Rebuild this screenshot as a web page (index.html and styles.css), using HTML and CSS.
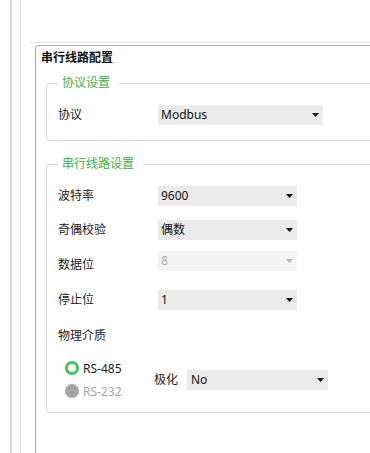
FILE: index.html
```html
<!DOCTYPE html>
<html lang="zh-CN">
<head>
    <meta charset="UTF-8">
    <meta name="viewport" content="width=device-width, initial-scale=1.0">
    <title>串行线路配置</title>
    <link rel="stylesheet" href="styles.css">
</head>
<body>
<div class="shell">
    <div class="pane">
        <div class="toolbarRule"></div>

        <section class="config">
            <div class="configTitle">串行线路配置</div>

            <fieldset class="group groupProtocol">
                <legend>协议设置</legend>
                <div class="row">
                    <span class="rowLabel">协议</span>
                    <div class="combo comboWide">
                        <span>Modbus</span>
                        <svg class="arrow" width="7" height="4" viewBox="0 0 7 4"><path d="M0 0H7L3.5 4Z"/></svg>
                    </div>
                </div>
            </fieldset>

            <fieldset class="group groupSerial">
                <legend>串行线路设置</legend>
                <div class="row">
                    <span class="rowLabel">波特率</span>
                    <div class="combo">
                        <span>9600</span>
                        <svg class="arrow" width="7" height="4" viewBox="0 0 7 4"><path d="M0 0H7L3.5 4Z"/></svg>
                    </div>
                </div>
                <div class="row rowParity">
                    <span class="rowLabel">奇偶校验</span>
                    <div class="combo">
                        <span>偶数</span>
                        <svg class="arrow" width="7" height="4" viewBox="0 0 7 4"><path d="M0 0H7L3.5 4Z"/></svg>
                    </div>
                </div>
                <div class="row rowData">
                    <span class="rowLabel">数据位</span>
                    <div class="combo disabled">
                        <span>8</span>
                        <svg class="arrow" width="7" height="4" viewBox="0 0 7 4"><path d="M0 0H7L3.5 4Z"/></svg>
                    </div>
                </div>
                <div class="row rowStop">
                    <span class="rowLabel">停止位</span>
                    <div class="combo">
                        <span>1</span>
                        <svg class="arrow" width="7" height="4" viewBox="0 0 7 4"><path d="M0 0H7L3.5 4Z"/></svg>
                    </div>
                </div>
                <div class="row rowMedium">
                    <span class="rowLabel">物理介质</span>
                </div>

                <div class="mediumRow">
                    <div class="radios">
                        <div class="radioItem">
                            <span class="radio checked"></span>
                            <span>RS-485</span>
                        </div>
                        <div class="radioItem off">
                            <span class="radio"></span>
                            <span>RS-232</span>
                        </div>
                    </div>
                    <span class="polarLabel">极化</span>
                    <div class="combo comboPolar">
                        <span>No</span>
                        <svg class="arrow" width="7" height="4" viewBox="0 0 7 4"><path d="M0 0H7L3.5 4Z"/></svg>
                    </div>
                </div>
            </fieldset>
        </section>
    </div>
</div>
</body>
</html>
```

FILE: styles.css
```css
body {
    margin: 0;
    padding: 0;
    width: 370px;
    height: 453px;
    overflow: hidden;
    background: #ffffff;
    font-family: "Noto Sans", "Noto Sans CJK SC", sans-serif;
    font-size: 12px;
    color: #1b1b1b;
}

.shell {
    margin-left: 10px;
    height: 453px;
    border-left: 2px solid #d8d8d8;
}

.pane {
    margin-left: 8px;
    height: 453px;
    padding-top: 42px;
    box-sizing: border-box;
    border-left: 1px solid #e2e2e2;
}

.toolbarRule {
    margin-left: 9px;
    border-top: 1px solid #e4e4e4;
}

/* outer box runs off the right and bottom edges */
.config {
    margin-left: 14px;
    margin-top: 2px;
    height: 408px;
    box-sizing: border-box;
    border: 1px solid #a6a6a6;
    border-right: none;
    border-bottom: none;
    border-radius: 4px 0 0 0;
}

.configTitle {
    padding: 3px 0 0 5px;
    line-height: 18px;
    font-weight: bold;
    color: #111111;
}

/* group boxes */
.group {
    margin: 8px 0 0 10px;
    padding: 0 0 15px 11px;
    border: 1px solid #d6d6d6;
    border-right: none;
    border-radius: 4px 0 0 4px;
}

.group legend {
    padding: 0 9px 0 4px;
    line-height: 16px;
    color: #3fae4a;
}

.groupProtocol .row {
    margin-top: 14px;
}

.groupSerial {
    margin-top: 15px;
    padding-bottom: 9px;
}

.groupSerial .row:first-of-type {
    margin-top: 14px;
}

.row {
    display: flex;
    align-items: center;
    height: 20px;
}

.rowLabel {
    width: 100px;
    line-height: 20px;
}

.rowParity {
    margin-top: 14px;
}

.rowData {
    margin-top: 11px;
    height: 24px;
    align-items: flex-end;
}

.rowData .combo {
    margin-bottom: 4px;
}

.rowStop {
    margin-top: 15px;
}

.rowMedium {
    margin-top: 16px;
}

/* combo boxes */
.combo {
    display: flex;
    align-items: center;
    justify-content: space-between;
    box-sizing: border-box;
    width: 139px;
    height: 20px;
    padding: 0 4px 0 3px;
    background: #ebebeb;
    color: #111111;
    line-height: 20px;
}

.comboWide {
    width: 165px;
}

.combo .arrow {
    fill: #151515;
}

.combo.disabled {
    background: #f4f4f4;
    color: #ababab;
}

.combo.disabled .arrow {
    fill: #b4b4b4;
}

/* physical medium */
.mediumRow {
    display: flex;
    align-items: center;
    margin-top: 11px;
}

.radios {
    width: 89px;
    margin-left: 7px;
    box-sizing: border-box;
}

.radioItem {
    display: flex;
    align-items: center;
    height: 22px;
    gap: 4px;
    white-space: nowrap;
}

.radioItem.off {
    color: #a4a4a4;
    height: 24px;
}

.radio {
    width: 14px;
    height: 14px;
    box-sizing: border-box;
    border-radius: 50%;
    background: #a3a3a8;
}

.radio.checked {
    background: #ffffff;
    border: 3px solid #3ec75a;
}

.polarLabel {
    width: 33px;
    line-height: 20px;
}

.comboPolar {
    width: 141px;
    padding-left: 4px;
}
```
